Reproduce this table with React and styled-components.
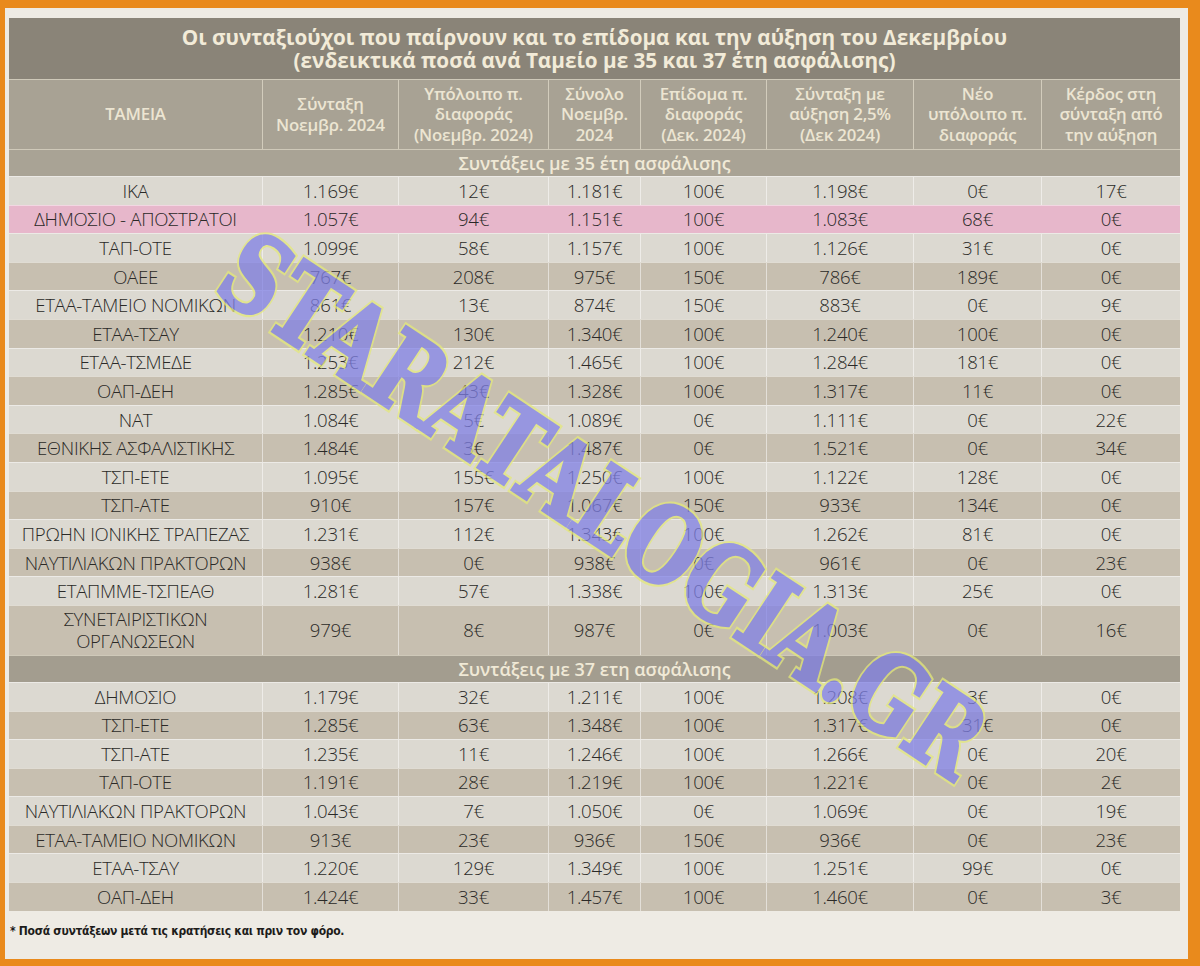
import React from "react"
import styled, { createGlobalStyle } from "styled-components"

const COLS = "253px 136px 150px 92px 126px 147px 128px 139px"

const GlobalStyle = createGlobalStyle`
  html, body {
    margin: 0;
    padding: 0;
    background: #ebe8e1;
  }
`

const Frame = styled.div`
  width: 1200px;
  height: 966px;
  box-sizing: border-box;
  border-style: solid;
  border-color: #e98a1c;
  border-width: 8px 12px 7px 5px;
  background: #eeebe4;
  padding: 10px 8px 0 4px;
  position: relative;
  overflow: hidden;
  font-family: "Open Sans", "Noto Sans", sans-serif;
`

const Table = styled.div`
  width: 1171px;
  display: flex;
  flex-direction: column;
`

const TitleBar = styled.div`
  height: 61px;
  background: #8a8478;
  color: #f2ebd8;
  font-weight: 700;
  font-size: 20.7px;
  line-height: 23px;
  display: flex;
  flex-direction: column;
  align-items: center;
  justify-content: center;
  box-sizing: border-box;
`

const HeadRow = styled.div`
  display: grid;
  grid-template-columns: ${COLS};
  height: 70px;
  background: #a8a294;
  border-top: 1px solid #cfc9b9;
  box-sizing: border-box;
`

const HeadCell = styled.div`
  display: flex;
  align-items: center;
  justify-content: center;
  text-align: center;
  color: #ece5d2;
  font-weight: 600;
  font-size: 16.8px;
  line-height: 20.5px;
  letter-spacing: -0.2px;
  border-left: 1px solid #d2ccbc;
  &:first-child {
    border-left: none;
  }
`

const SectionRow = styled.div`
  height: 27px;
  background: ${(p) => (p.$second ? "#a39d8f" : "#a9a395")};
  border-top: 1px solid #cfc9b9;
  box-sizing: border-box;
  display: flex;
  align-items: center;
  justify-content: center;
  color: #f0e9d6;
  font-weight: 600;
  font-size: 18px;
`

const rowBg = {
  light: "#dcd9d1",
  dark: "#c7bfb0",
  pink: "#e7b7cb",
}

const Row = styled.div`
  display: grid;
  grid-template-columns: ${COLS};
  height: ${(p) => (p.$tall ? "50px" : "28.6px")};
  background: ${(p) => rowBg[p.$tone]};
  border-top: 1px solid rgba(255, 255, 255, 0.45);
  box-sizing: border-box;
`

const Cell = styled.div`
  display: flex;
  align-items: center;
  justify-content: center;
  text-align: center;
  color: #2a2927;
  font-weight: 300;
  font-size: 18.6px;
  line-height: 22px;
  letter-spacing: -0.3px;
  border-left: 1px solid ${(p) => (p.$pink ? "transparent" : "rgba(255, 255, 255, 0.5)")};
  &:first-child {
    border-left: none;
  }
`

const Footnote = styled.div`
  margin-top: 13px;
  padding-left: 1px;
  font-family: "DejaVu Sans Condensed", "DejaVu Sans", sans-serif;
  font-weight: 700;
  font-size: 12px;
  letter-spacing: -0.3px;
  color: #1d1c1a;
`

// yellow halo underneath, thickened lavender letters on top (via ::after)
const Watermark = styled.div`
  position: absolute;
  left: 598px;
  top: 497px;
  transform: translate(-50%, -50%) rotate(33.5deg) scaleX(0.77);
  font-family: "DejaVu Serif", "Liberation Serif", serif;
  font-weight: 700;
  font-size: 106px;
  letter-spacing: 0px;
  white-space: nowrap;
  color: #e4e97a;
  -webkit-text-stroke: 8px #e4e97a;
  opacity: 0.74;
  pointer-events: none;
  &::after {
    content: attr(data-text);
    position: absolute;
    left: 0;
    top: 0;
    color: #8080e6;
    -webkit-text-stroke: 3.5px #8080e6;
  }
`

const headers = [
  ["ΤΑΜΕΙΑ"],
  ["Σύνταξη", "Νοεμβρ. 2024"],
  ["Υπόλοιπο π.", "διαφοράς", "(Νοεμβρ. 2024)"],
  ["Σύνολο", "Νοεμβρ.", "2024"],
  ["Επίδομα π.", "διαφοράς", "(Δεκ. 2024)"],
  ["Σύνταξη με", "αύξηση 2,5%", "(Δεκ 2024)"],
  ["Νέο", "υπόλοιπο π.", "διαφοράς"],
  ["Κέρδος στη", "σύνταξη από", "την αύξηση"],
]

const years35 = [
  ["ΙΚΑ", "1.169€", "12€", "1.181€", "100€", "1.198€", "0€", "17€"],
  ["ΔΗΜΟΣΙΟ - ΑΠΟΣΤΡΑΤΟΙ", "1.057€", "94€", "1.151€", "100€", "1.083€", "68€", "0€"],
  ["ΤΑΠ-ΟΤΕ", "1.099€", "58€", "1.157€", "100€", "1.126€", "31€", "0€"],
  ["ΟΑΕΕ", "767€", "208€", "975€", "150€", "786€", "189€", "0€"],
  ["ΕΤΑΑ-ΤΑΜΕΙΟ ΝΟΜΙΚΩΝ", "861€", "13€", "874€", "150€", "883€", "0€", "9€"],
  ["ΕΤΑΑ-ΤΣΑΥ", "1.210€", "130€", "1.340€", "100€", "1.240€", "100€", "0€"],
  ["ΕΤΑΑ-ΤΣΜΕΔΕ", "1.253€", "212€", "1.465€", "100€", "1.284€", "181€", "0€"],
  ["ΟΑΠ-ΔΕΗ", "1.285€", "43€", "1.328€", "100€", "1.317€", "11€", "0€"],
  ["ΝΑΤ", "1.084€", "5€", "1.089€", "0€", "1.111€", "0€", "22€"],
  ["ΕΘΝΙΚΗΣ ΑΣΦΑΛΙΣΤΙΚΗΣ", "1.484€", "3€", "1.487€", "0€", "1.521€", "0€", "34€"],
  ["ΤΣΠ-ΕΤΕ", "1.095€", "155€", "1.250€", "100€", "1.122€", "128€", "0€"],
  ["ΤΣΠ-ΑΤΕ", "910€", "157€", "1.067€", "150€", "933€", "134€", "0€"],
  ["ΠΡΩΗΝ ΙΟΝΙΚΗΣ ΤΡΑΠΕΖΑΣ", "1.231€", "112€", "1.343€", "100€", "1.262€", "81€", "0€"],
  ["ΝΑΥΤΙΛΙΑΚΩΝ ΠΡΑΚΤΟΡΩΝ", "938€", "0€", "938€", "0€", "961€", "0€", "23€"],
  ["ΕΤΑΠΜΜΕ-ΤΣΠΕΑΘ", "1.281€", "57€", "1.338€", "100€", "1.313€", "25€", "0€"],
  ["ΣΥΝΕΤΑΙΡΙΣΤΙΚΩΝ\nΟΡΓΑΝΩΣΕΩΝ", "979€", "8€", "987€", "0€", "1.003€", "0€", "16€"],
]

const years37 = [
  ["ΔΗΜΟΣΙΟ", "1.179€", "32€", "1.211€", "100€", "1.208€", "3€", "0€"],
  ["ΤΣΠ-ΕΤΕ", "1.285€", "63€", "1.348€", "100€", "1.317€", "31€", "0€"],
  ["ΤΣΠ-ΑΤΕ", "1.235€", "11€", "1.246€", "100€", "1.266€", "0€", "20€"],
  ["ΤΑΠ-ΟΤΕ", "1.191€", "28€", "1.219€", "100€", "1.221€", "0€", "2€"],
  ["ΝΑΥΤΙΛΙΑΚΩΝ ΠΡΑΚΤΟΡΩΝ", "1.043€", "7€", "1.050€", "0€", "1.069€", "0€", "19€"],
  ["ΕΤΑΑ-ΤΑΜΕΙΟ ΝΟΜΙΚΩΝ", "913€", "23€", "936€", "150€", "936€", "0€", "23€"],
  ["ΕΤΑΑ-ΤΣΑΥ", "1.220€", "129€", "1.349€", "100€", "1.251€", "99€", "0€"],
  ["ΟΑΠ-ΔΕΗ", "1.424€", "33€", "1.457€", "100€", "1.460€", "0€", "3€"],
]

const Lines = ({ text }) =>
  text.split("\n").map((l, i) => (
    <React.Fragment key={i}>
      {i > 0 && <br />}
      {l}
    </React.Fragment>
  ))

const DataRows = ({ rows, highlight }) =>
  rows.map((r, i) => {
    const pink = r[0] === highlight
    const tone = pink ? "pink" : i % 2 === 0 ? "light" : "dark"
    return (
      <Row key={i} $tone={tone} $tall={r[0].includes("\n")}>
        {r.map((c, j) => (
          <Cell key={j} $pink={pink}>
            <span>
              <Lines text={c} />
            </span>
          </Cell>
        ))}
      </Row>
    )
  })

const WATERMARK = "STARATALOGIA.GR"

const App = () => (
  <>
    <GlobalStyle />
    <Frame>
      <Table>
        <TitleBar>
          <div>Οι συνταξιούχοι που παίρνουν και το επίδομα και την αύξηση του Δεκεμβρίου</div>
          <div>(ενδεικτικά ποσά ανά Ταμείο με 35 και 37 έτη ασφάλισης)</div>
        </TitleBar>
        <HeadRow>
          {headers.map((h, i) => (
            <HeadCell key={i}>
              <span>
                <Lines text={h.join("\n")} />
              </span>
            </HeadCell>
          ))}
        </HeadRow>
        <SectionRow>Συντάξεις με 35 έτη ασφάλισης</SectionRow>
        <DataRows rows={years35} highlight="ΔΗΜΟΣΙΟ - ΑΠΟΣΤΡΑΤΟΙ" />
        <SectionRow $second>Συντάξεις με 37 ετη ασφάλισης</SectionRow>
        <DataRows rows={years37} />
      </Table>
      <Footnote>* Ποσά συντάξεων μετά τις κρατήσεις και πριν τον φόρο.</Footnote>
      <Watermark data-text={WATERMARK}>{WATERMARK}</Watermark>
    </Frame>
  </>
)

export default App
